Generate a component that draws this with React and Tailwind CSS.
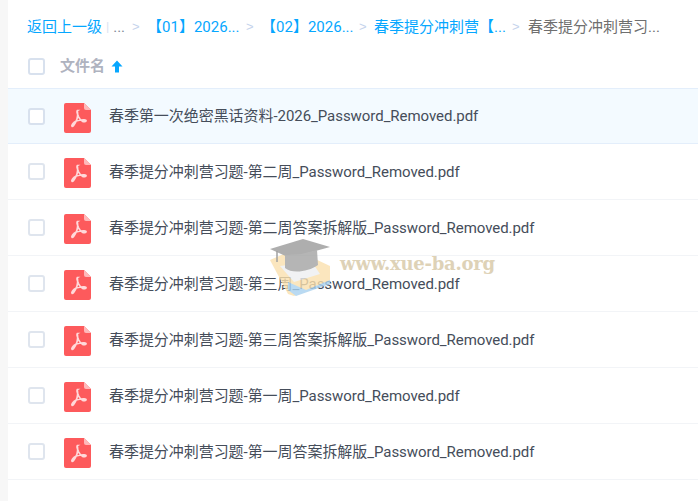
const files = [
  "春季第一次绝密黑话资料-2026_Password_Removed.pdf",
  "春季提分冲刺营习题-第二周_Password_Removed.pdf",
  "春季提分冲刺营习题-第二周答案拆解版_Password_Removed.pdf",
  "春季提分冲刺营习题-第三周_Password_Removed.pdf",
  "春季提分冲刺营习题-第三周答案拆解版_Password_Removed.pdf",
  "春季提分冲刺营习题-第一周_Password_Removed.pdf",
  "春季提分冲刺营习题-第一周答案拆解版_Password_Removed.pdf",
];

function PdfIcon() {
  return (
    <svg width="27" height="30" viewBox="0 0 27 30" className="block">
      <path d="M2 0H20L27 7V28a2 2 0 0 1-2 2H2a2 2 0 0 1-2-2V2a2 2 0 0 1 2-2Z" fill="#fd5a5c" />
      <path d="M20 0L27 7H22a2 2 0 0 1-2-2Z" fill="#feb9ba" />
      <path
        d="M13.400 7.500c-1 .6.3 4.300 1.200 6.300 1 2 2.200 3.600 3.600 4.300 1.600.7 4 .6 3.900-.4-.1-1-3-1-5.300-.7-2.500.3-5 1-6.500 2.200-1.500 1.200-3 3.600-2.300 4.100.8.5 2.400-1.700 3.400-3.600 1.100-2 2.100-4.800 2.200-7 .1-2.300-.1-4.900-.7-5.200Z"
        fill="none"
        stroke="#ffd9da"
        strokeWidth="1.700"
      />
    </svg>
  );
}

function Box({ light }) {
  return (
    <span className={`block w-4.25 h-4.25 rounded-[3px] border-2 bg-white shrink-0 ${light ? "border-[#dfe5ee]" : "border-[#d8e1ee]"}`} />
  );
}

function Sep() {
  return <span className="w-[8px] mx-[7px] text-[#c5d3ec] text-[13px] shrink-0 font-['Liberation_Sans',sans-serif]">&gt;</span>;
}

function Watermark() {
  return (
    <div className="absolute left-[268px] top-[236px] w-[232px] h-[62px] pointer-events-none opacity-80">
      <svg width="70" height="62" viewBox="0 0 70 62" className="absolute left-0 top-0">
        <path d="M2 24L18 17L45 22L62 30L62 46L26 60L20 58Z" fill="#fbe1ae" />
        <path d="M20 46L38 54L62 44L62 48L28 60L20 54Z" fill="#a9d2ef" />
        <path d="M12 30L44 26L52 38L26 46Z" fill="#eef0f2" />
        <path d="M2 13L35 3L62 11L22 22Z" fill="#9a9a9a" />
        <path d="M17 19L17 32C24 38 40 36 50 29L49 14L33 18Z" fill="#a3a3a3" />
        <path d="M9 15V26" stroke="#8a8a8a" strokeWidth="1.500" />
      </svg>
      <span className="absolute left-[72px] top-[16px] text-[#d7c8a6] text-[18px] leading-[24px] font-bold whitespace-nowrap font-['DejaVu_Serif',serif] tracking-[-0.25px]">
        www.xue-ba.org
      </span>
    </div>
  );
}

export default function App() {
  return (
    <div className="relative w-[698px] h-[501px] overflow-hidden flex bg-white text-[15px] font-['Roboto','Noto_Sans_CJK_SC',sans-serif]">
      <div className="w-2 bg-[#f7f7f7] shrink-0" />
      <div className="flex-1 min-w-0">
        <nav className="h-[44px] pt-[10px] pl-[19px] flex items-center whitespace-nowrap text-[#06a7ff]">
          <span className="w-[75px]">返回上一级</span>
          <span className="text-[#d9e3f0] text-[13px] ml-[4px] mr-[4px]">|</span>
          <span className="text-[#818999]">...</span>
          <Sep />
          <span className="w-[92px]">【01】2026...</span>
          <Sep />
          <span className="w-[91px]">【02】2026...</span>
          <Sep />
          <span className="w-[131px]">春季提分冲刺营【...</span>
          <Sep />
          <span className="text-[#6f6f6f] ml-[1px]">春季提分冲刺营习...</span>
        </nav>
        <div className="h-[44px] pl-5 flex items-center">
          <Box />
          <span className="ml-[15px] text-[#afb3bf] font-bold">文件名</span>
          <svg width="12" height="13" viewBox="0 0 12 13" className="ml-[6px]">
            <path d="M6 .5L11.500 6.500H8V12.500H4V6.500H.5Z" fill="#06a7ff" />
          </svg>
        </div>
        {files.map((name, i) => (
          <div
            key={name}
            className={`h-[56px] pl-5 flex items-center border-b ${i === 0 ? "bg-[#f3faff] border-y-[#e3eefb] border-t" : "border-[#f2f4f7]"}`}
          >
            <Box light={i !== 0} />
            <span className="ml-[19px] mt-[3px]"><PdfIcon /></span>
            <span className="ml-[18px] mt-[1px] text-[#454d5a] whitespace-nowrap tracking-[-0.05px]">{name}</span>
          </div>
        ))}
      </div>
      <Watermark />
    </div>
  );
}
